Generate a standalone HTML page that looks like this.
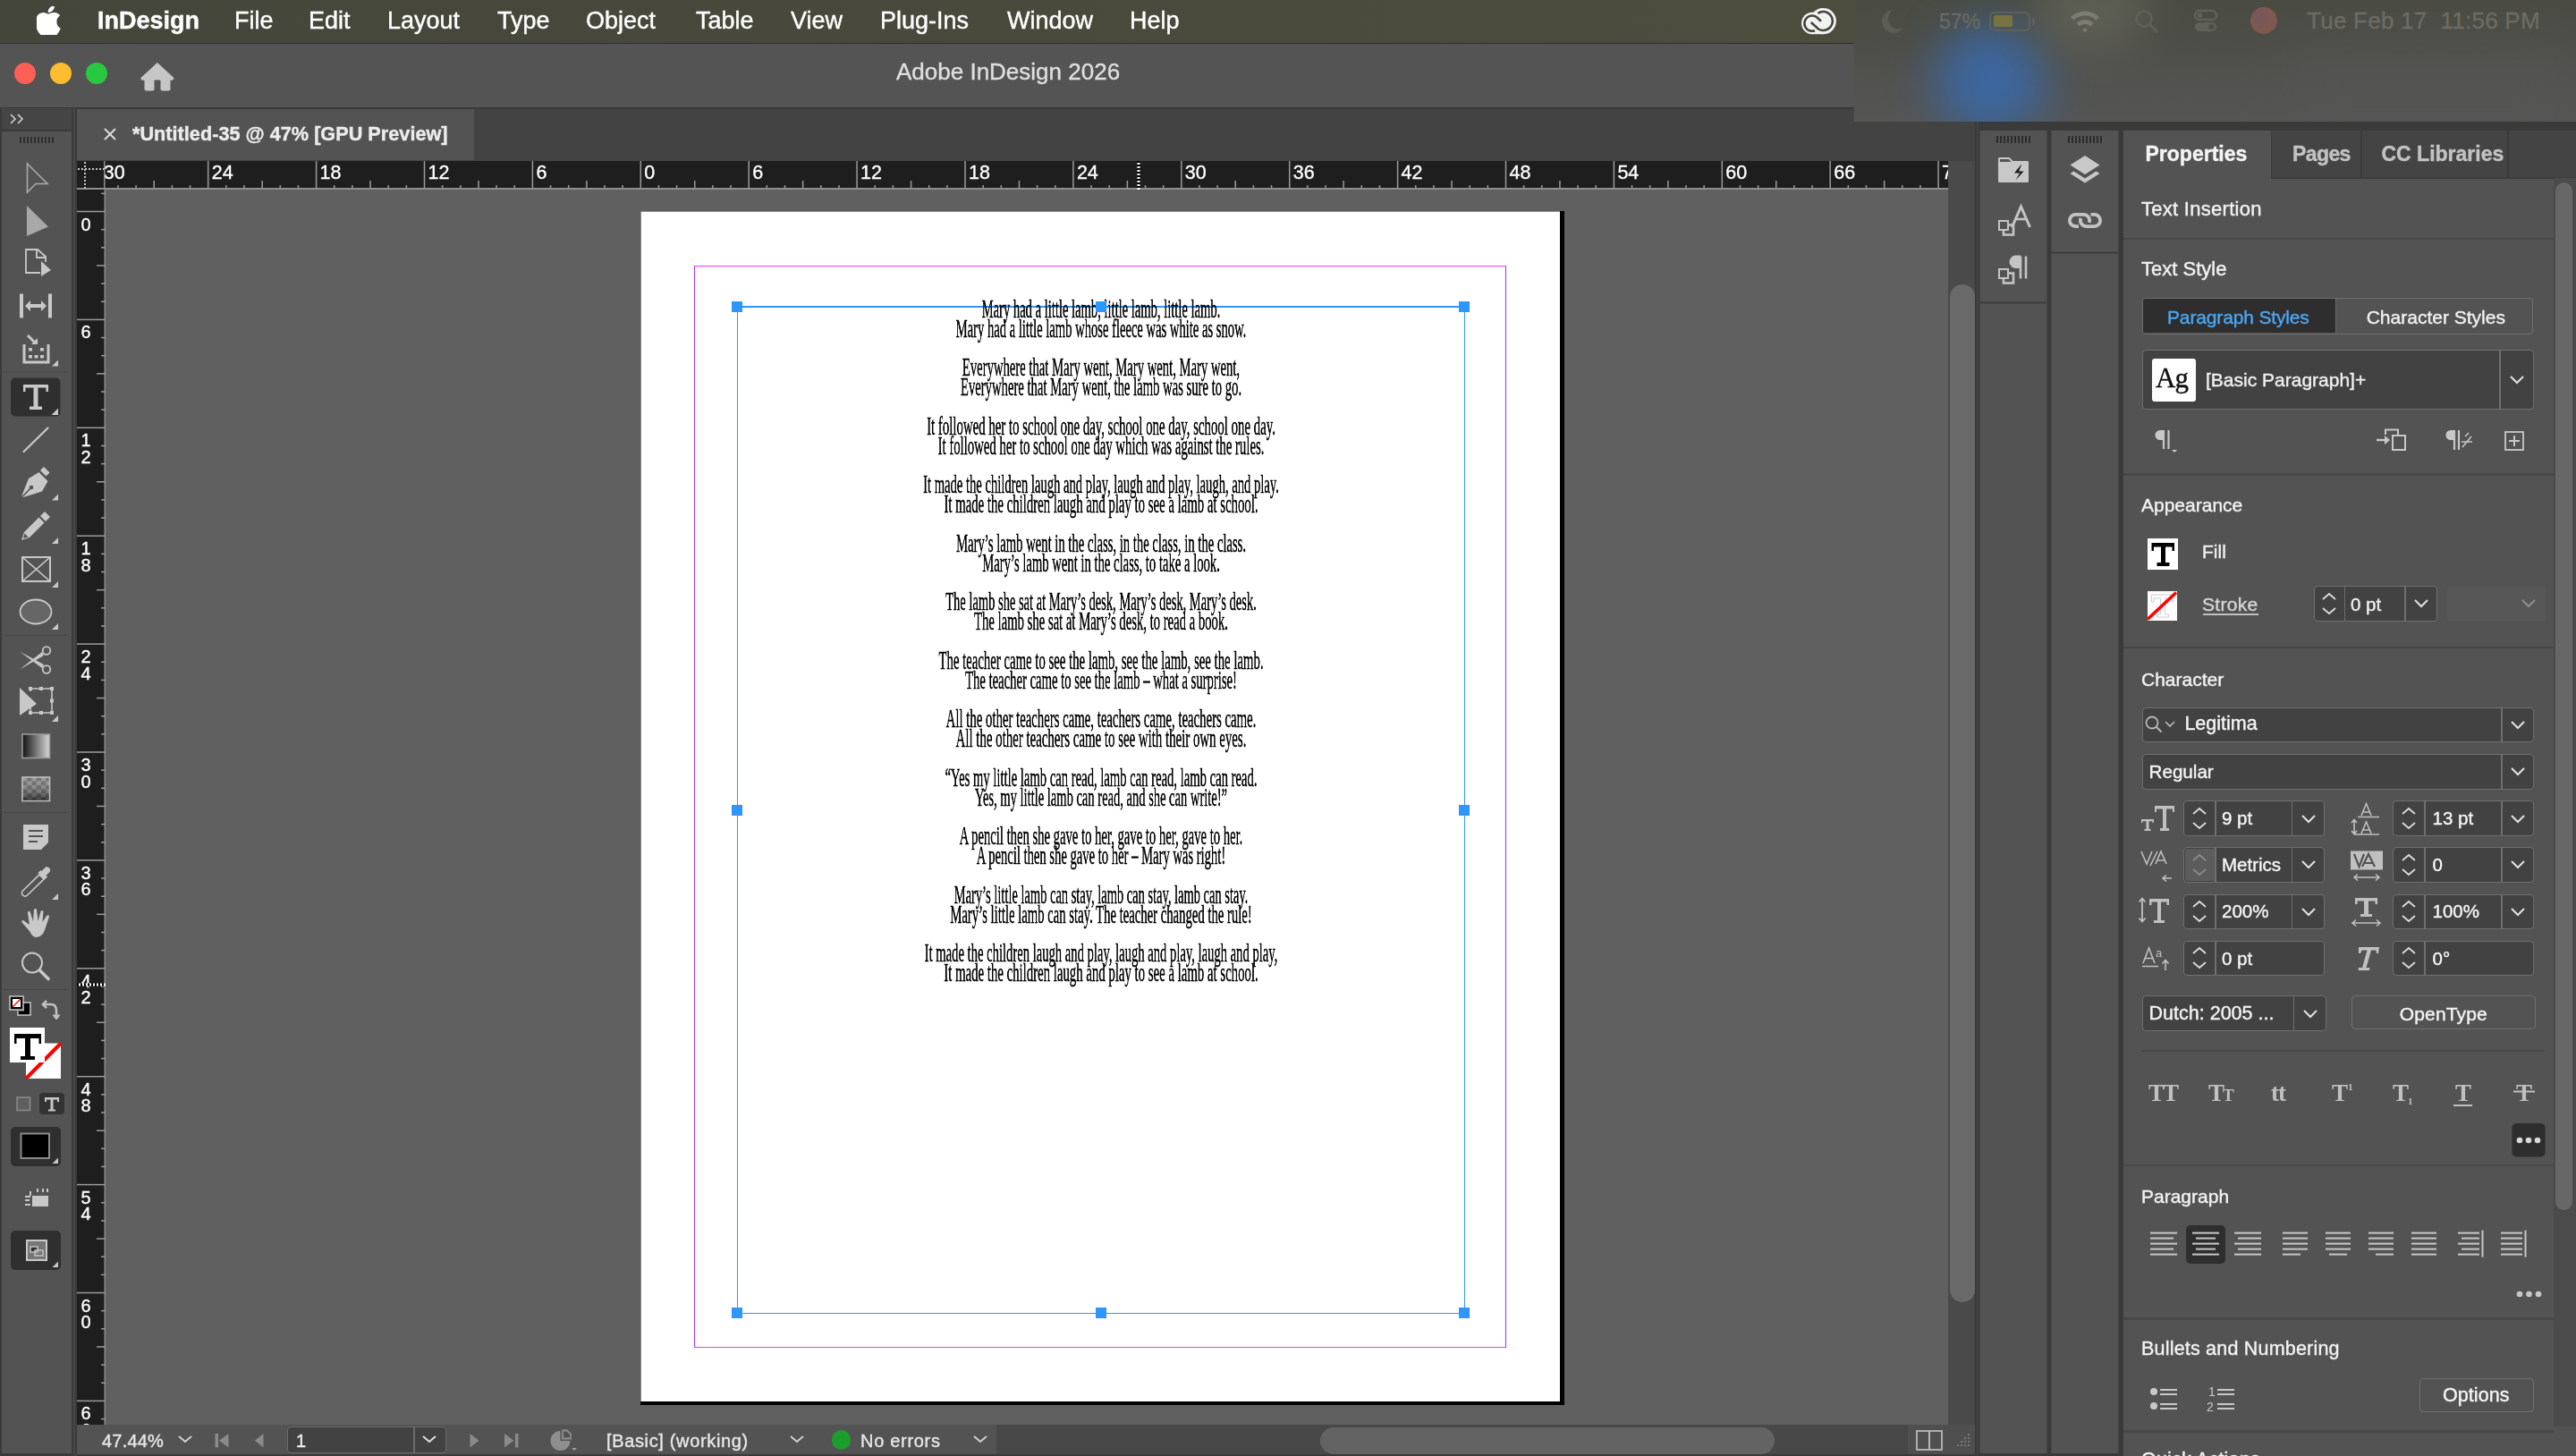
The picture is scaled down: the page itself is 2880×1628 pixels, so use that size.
<!DOCTYPE html>
<html><head><meta charset="utf-8">
<style>
*{margin:0;padding:0;box-sizing:border-box}
html,body{width:2880px;height:1628px;overflow:hidden;background:#535353;font-family:"Liberation Sans",sans-serif;position:relative}
.a{position:absolute}
#menubar,#titlebar,#tabbar,#status,#props,#dock,#toolbar,body>svg{will-change:transform}
.t{position:absolute;white-space:nowrap;line-height:1;-webkit-text-stroke:0.4px currentColor}
.mi{position:absolute;top:10px;font-size:27px;line-height:1;color:#fff;white-space:nowrap;-webkit-text-stroke:0.4px #fff}
#menubar{left:0;top:0;width:2880px;height:48px;background:linear-gradient(90deg,#45463b 0%,#494a3c 40%,#4c4d3d 72%)}
#titlebar{left:0;top:48px;width:2880px;height:73px;background:#545454;border-top:1px solid #2e2e2e;border-bottom:1.5px solid #393939}
#toolbar{left:0;top:121px;width:86px;height:1507px;background:#3e3e3e;z-index:1}
#tabbar{left:86px;top:121px;width:2122px;height:59px;background:#434343;border-top:1.5px solid #393939}
#rulerH{left:86px;top:180px;width:2092px;height:32px;background:#1e1e1e}
#rulerV{left:86px;top:212px;width:32px;height:1381px;background:#1e1e1e}
#canvas{left:118px;top:212px;width:2060px;height:1381px;background:#606060;overflow:hidden}
.pl{position:absolute;left:230.75px;width:2000px;text-align:center;transform-origin:1000px 0;font-family:"Liberation Serif",serif;font-size:28.7px;line-height:1;color:#000;white-space:nowrap;-webkit-text-stroke:0.5px #000;will-change:transform}
.hd{position:absolute;width:12px;height:12px;background:#2e96ff}
#status{left:86px;top:1593px;width:2122px;height:35px;background:#535353}
#vscroll{left:2178px;top:180px;width:30px;height:1413px;background:#4a4a4a}
#dock{left:2208px;top:136px;width:672px;height:1492px;background:#3a3a3a}
#props{left:2374px;top:145px;width:506px;height:1483px;background:#535353}
</style></head><body>
<!-- MENUBAR -->
<div id="menubar" class="a">
 <svg class="a" style="left:41px;top:7px" width="27" height="32" viewBox="0 0 170 200"><path fill="#fff" d="M150 157c-7 16-10 23-19 37-13 19-31 43-53 43-20 0-25-13-52-13s-33 13-53 13C-49 237-67 215-80 196" transform="translate(0,0)" opacity="0"/><path fill="#fff" d="M141 106c0-27 22-40 23-41-13-19-33-21-40-21-17-2-33 10-42 10-9 0-22-10-36-10C27 45 10 56 0 73c-19 34-5 84 14 111 9 13 20 28 34 28 14-1 19-9 36-9 17 0 21 9 36 9 15 0 24-14 33-27 10-15 15-30 15-31-1 0-27-10-27-48zM114 28c8-9 13-22 11-35-11 1-25 8-33 17-7 8-14 21-12 34 12 1 25-6 34-16z" transform="translate(0,0) scale(1)"/></svg>
 <div class="mi" style="left:109px;font-weight:700">InDesign</div>
 <div class="mi" style="left:262px">File</div>
 <div class="mi" style="left:345px">Edit</div>
 <div class="mi" style="left:433px">Layout</div>
 <div class="mi" style="left:556px">Type</div>
 <div class="mi" style="left:655px">Object</div>
 <div class="mi" style="left:778px">Table</div>
 <div class="mi" style="left:884px">View</div>
 <div class="mi" style="left:984px">Plug-Ins</div>
 <div class="mi" style="left:1126px">Window</div>
 <div class="mi" style="left:1263px">Help</div>
 <!-- CC icon -->
 <svg class="a" style="left:2005px;top:0" width="60" height="48" viewBox="2005 0 60 48"><g fill="#f2f2f2"><circle cx="2026.2" cy="26" r="12.2"/><circle cx="2038.3" cy="23.6" r="14.6"/><rect x="2026" y="26" width="12.5" height="12.2"/></g><g fill="none" stroke="#45463b" stroke-width="2.6"><path d="M2036 23.7 L2032 20 A8.6 8.6 0 1 0 2029 34.2"/><path d="M2024.8 25 L2033 32.5 A10.5 10.5 0 1 0 2032.5 14.8"/></g></svg>
</div>
<!-- TITLEBAR -->
<div id="titlebar" class="a">
 <div class="a" style="left:16px;top:21px;width:24px;height:24px;border-radius:50%;background:#fe5f57"></div>
 <div class="a" style="left:56px;top:21px;width:24px;height:24px;border-radius:50%;background:#febc2e"></div>
 <div class="a" style="left:96px;top:21px;width:24px;height:24px;border-radius:50%;background:#28c840"></div>
 <svg class="a" style="left:150px;top:12px" width="60" height="50" viewBox="150 60 60 50"><path d="M175.9 69.5 L193.8 86 Q194.8 87.8 192.5 88.3 L190 88.3 L190 99 Q190 100 189 100 L181 100 Q180 100 180 99 L180 89 Q180 88 179 88 L173 88 Q172 88 172 89 L172 99 Q172 100 171 100 L163 100 Q162 100 162 99 L162 88.3 L159.5 88.3 Q157 87.8 158 86 Z" fill="#c6c6c6" stroke="#c6c6c6" stroke-width="1" stroke-linejoin="round"/></svg>
 <div class="t" style="left:1002px;top:17.5px;font-size:26px;color:#dedede">Adobe InDesign 2026</div>
</div>
<!-- BLUR OVERLAY -->
<div class="a" style="left:2073px;top:0;width:807px;height:136px;z-index:10;background:linear-gradient(180deg,#4a4b42 0%,#4c4d46 30%,#51514e 60%,#555554 100%);overflow:hidden">
 <div class="a" style="left:90px;top:28px;width:125px;height:125px;border-radius:50%;background:#3b68a4;filter:blur(26px);opacity:0.95"></div>
 <div class="a" style="left:200px;top:-40px;width:130px;height:100px;border-radius:50%;background:#66675c;filter:blur(25px);opacity:0.7"></div>
 <div class="a" style="left:480px;top:40px;width:330px;height:110px;background:#575757;filter:blur(30px);opacity:0.4"></div>
 <svg class="a" style="left:24px;top:9px" width="34" height="30"><path d="M20 2 A13 13 0 1 0 31 22 A11 11 0 0 1 20 2 Z" fill="#5c5d54"/></svg>
 <div class="t" style="left:95px;top:12.6px;font-size:23px;color:#696a5f">57%</div>
 <div class="a" style="left:151px;top:12.5px;width:46px;height:22px;border:2px solid #5f6057;border-radius:6px"><div class="a" style="left:2.5px;top:2.5px;width:21px;height:13px;background:#787340;border-radius:2px"></div></div>
 <div class="a" style="left:198.5px;top:19.5px;width:3px;height:8px;background:#5f6057;border-radius:0 2px 2px 0"></div>
 <svg class="a" style="left:240px;top:9px" width="36" height="28" viewBox="0 0 36 28"><path d="M2 10 A23 23 0 0 1 34 10 L30.5 13.5 A18 18 0 0 0 5.5 13.5 Z M8.5 17 A13.5 13.5 0 0 1 27.5 17 L24 20.5 A8.5 8.5 0 0 0 12 20.5 Z M15 24 A4.5 4.5 0 0 1 21 24 L18 27 Z" fill="#7b7b72"/></svg>
 <svg class="a" style="left:313px;top:10px" width="28" height="28"><circle cx="11" cy="11" r="8.5" fill="none" stroke="#5f6057" stroke-width="2.6"/><path d="M17.5 17.5 L25 25" stroke="#5f6057" stroke-width="3" stroke-linecap="round"/></svg>
 <svg class="a" style="left:379px;top:10px" width="30" height="28"><rect x="2" y="2" width="24" height="10" rx="5" fill="none" stroke="#5f6057" stroke-width="2.4"/><circle cx="7.5" cy="7" r="3" fill="#5f6057"/><rect x="2" y="15" width="24" height="10" rx="5" fill="#5f6057"/><circle cx="20.5" cy="20" r="3" fill="#4c4d46"/></svg>
 <div class="a" style="left:443px;top:8px;width:30px;height:30px;border-radius:50%;background:radial-gradient(circle at 40% 40%,#7a5a60,#8a5a50 60%,#6a5a58);opacity:0.85"></div>
 <div class="t" style="left:2579px;top:10px;font-size:26px;color:#6b6c62;letter-spacing:0.25px;margin-left:-2073px">Tue Feb 17&nbsp;&nbsp;11:56 PM</div>
</div>
<!-- TOOLBAR -->
<div id="toolbar" class="a">
<svg class="a" style="left:0;top:0" width="86" height="1507" viewBox="0 121 86 1507">
<rect x="0" y="121" width="86" height="1507" fill="#3b3b3b"/>
<rect x="2" y="121" width="78" height="1504" fill="#535353"/>
<rect x="82" y="121" width="2" height="1507" fill="#474747"/>
<rect x="2" y="121" width="78" height="24" fill="#454545"/>
<rect x="2" y="145" width="78" height="2" fill="#3a3a3a"/>
<path d="M12 128l5 5-5 5M20 128l5 5-5 5" fill="none" stroke="#d0d0d0" stroke-width="1.6"/>
<g fill="#2e2e2e">
<rect x="22" y="153" width="2" height="7"/><rect x="26" y="153" width="2" height="7"/><rect x="30" y="153" width="2" height="7"/><rect x="34" y="153" width="2" height="7"/><rect x="38" y="153" width="2" height="7"/><rect x="42" y="153" width="2" height="7"/><rect x="46" y="153" width="2" height="7"/><rect x="50" y="153" width="2" height="7"/><rect x="54" y="153" width="2" height="7"/><rect x="58" y="153" width="2" height="7"/>
</g>
<!-- selection -->
<path d="M30.5 183 L53 205.5 L40 205.5 L30.5 215 Z" fill="none" stroke="#a9a9a9" stroke-width="1.6" stroke-linejoin="miter"/>
<!-- direct selection -->
<path d="M30 230 L54 253.5 L30 264 Z" fill="#a8a8a8"/>
<!-- page tool -->
<path d="M45 305 L29 305 L29 279 L42 279 L51 287 L51 293" fill="none" stroke="#c8c8c8" stroke-width="1.8"/>
<path d="M41 279 L41 288 L51 288" fill="none" stroke="#c8c8c8" stroke-width="1.8"/>
<path d="M46 292 L57 302 L46 309 Z" fill="#c8c8c8"/>
<!-- gap tool -->
<rect x="22" y="328.5" width="4" height="27" fill="#c8c8c8"/><rect x="54" y="328.5" width="4" height="27" fill="#c8c8c8"/>
<path d="M28 342 L34 336 L34 340 L46 340 L46 336 L52 342 L46 348 L46 344 L34 344 L34 348 Z" fill="#c8c8c8"/>
<!-- content collector -->
<path d="M27 385 L27 405 L54 405 L54 385" fill="none" stroke="#c8c8c8" stroke-width="3"/>
<path d="M31 375 L39 383" stroke="#c8c8c8" stroke-width="3"/><path d="M35 385 L42 385 L42 378 Z" fill="#c8c8c8"/>
<g fill="#c8c8c8"><rect x="32" y="389" width="4" height="3.5"/><rect x="45" y="389" width="4" height="3.5"/><rect x="32" y="397" width="4" height="3.5"/><rect x="38.5" y="397" width="4" height="3.5"/><rect x="45" y="397" width="4" height="3.5"/></g>
<path d="M58 409.5 L65 402.5 L65 409.5 Z" fill="#c8c8c8"/>
<rect x="3" y="415.5" width="73" height="1" fill="#484848"/>
<!-- type tool selected -->
<rect x="12" y="422.5" width="55.5" height="43" rx="5" fill="#2f2f2f"/>
<path d="M26 430 L54 430 L54 438 L51.5 438 L51.5 433.5 L42.5 433.5 L42.5 454.5 L47 454.5 L47 458 L33 458 L33 454.5 L37.5 454.5 L37.5 433.5 L28.5 433.5 L28.5 438 L26 438 Z" fill="#c8c8c8"/>
<path d="M57.5 464 L65 456.5 L65 464 Z" fill="#c8c8c8"/>
<!-- line -->
<path d="M26.5 505 L53.5 478.5" stroke="#c8c8c8" stroke-width="2.2" stroke-linecap="round"/>
<!-- pen -->
<path d="M45 526 L49 522 L55.5 528.5 L51.5 532.5 Z" fill="#c8c8c8"/>
<path d="M43.5 528 L53.5 538 L47 549.5 L26 556 L24.5 554 L32 535 Z" fill="#c8c8c8"/><path d="M25.5 555 L34.5 545.5" stroke="#535353" stroke-width="1.6"/><circle cx="35" cy="545" r="2.3" fill="#535353"/>
<path d="M58 559.5 L65 552.5 L65 559.5 Z" fill="#c8c8c8"/>
<!-- pencil -->
<path d="M45 577 L50 572 L56 578 L51 583 Z" fill="#c8c8c8"/>
<path d="M43.5 578.5 L49.5 584.5 L33 601 L24 604 L27 595 Z" fill="#c8c8c8"/>
<path d="M27.5 596.5 L26 602 L31.5 600.5 Z" fill="#535353"/>
<path d="M58 608 L65 601 L65 608 Z" fill="#c8c8c8"/>
<!-- rect frame -->
<rect x="25" y="623" width="31" height="27" fill="none" stroke="#c8c8c8" stroke-width="2"/>
<path d="M25 623 L56 650 M56 623 L25 650" stroke="#c8c8c8" stroke-width="1.6"/>
<path d="M58 657 L65 650 L65 657 Z" fill="#c8c8c8"/>
<!-- ellipse -->
<ellipse cx="40" cy="684" rx="17.5" ry="13.5" fill="#666" stroke="#c8c8c8" stroke-width="1.8"/>
<path d="M58 704 L65 697 L65 704 Z" fill="#c8c8c8"/>
<rect x="4" y="710" width="72" height="1" fill="#484848"/>
<!-- scissors -->
<circle cx="52" cy="727.5" r="4.3" fill="none" stroke="#c8c8c8" stroke-width="1.8"/>
<circle cx="52" cy="748.5" r="4.3" fill="none" stroke="#c8c8c8" stroke-width="1.8"/>
<path d="M22 728.5 L49 743 L47 747 Z" fill="#c8c8c8"/><path d="M22 748.5 L49 733 L47 729 Z" fill="#c8c8c8"/>
<!-- free transform -->
<path d="M22 769 L41 787 L22 800 Z" fill="#c8c8c8"/>
<path d="M34 773 L34 770 L58 770 L58 797 L34 797 L34 790" fill="none" stroke="#c8c8c8" stroke-width="1.6"/>
<g fill="#c8c8c8"><rect x="32" y="768" width="4" height="4"/><rect x="44" y="768" width="4" height="4"/><rect x="56" y="768" width="4" height="4"/><rect x="56" y="781.5" width="4" height="4"/><rect x="32" y="795" width="4" height="4"/><rect x="44" y="795" width="4" height="4"/><rect x="56" y="795" width="4" height="4"/></g>
<path d="M58 807 L65 800 L65 807 Z" fill="#c8c8c8"/>
<!-- gradient -->
<defs><linearGradient id="gr" x1="0" x2="1"><stop offset="0" stop-color="#111"/><stop offset="1" stop-color="#d8d8d8"/></linearGradient>
<pattern id="chk" width="10.5" height="9" patternUnits="userSpaceOnUse" x="25" y="869"><rect width="10.5" height="9" fill="#5a5a5a"/><rect width="5.25" height="4.5" fill="#888"/><rect x="5.25" y="4.5" width="5.25" height="4.5" fill="#888"/></pattern>
<linearGradient id="fad" x1="0" y1="0" x2="0" y2="1"><stop offset="0" stop-color="#fff" stop-opacity="0.15"/><stop offset="1" stop-color="#000" stop-opacity="0.55"/></linearGradient></defs>
<rect x="25" y="821" width="30.5" height="26.5" fill="url(#gr)" stroke="#9a9a9a" stroke-width="1.6"/>
<!-- gradient feather -->
<rect x="25" y="869" width="30.5" height="26.5" fill="url(#chk)" stroke="#c0c0c0" stroke-width="1.6"/>
<rect x="25.8" y="869.8" width="29" height="25" fill="url(#fad)"/>
<rect x="3" y="908" width="73" height="1" fill="#484848"/>
<!-- note -->
<path d="M26 922 L54 922 L54 942 L46 950 L26 950 Z" fill="#c8c8c8"/>
<path d="M47 950 L54 943 L54 950 Z" fill="#535353"/>
<path d="M32 929 L48 929 M32 935 L48 935 M32 941 L42 941" stroke="#535353" stroke-width="2"/>
<!-- eyedropper -->
<path d="M46.5 974 L50 970.5 A3.5 3.5 0 0 1 55 975.5 L51.5 979 L53 980.5 L50 983.5 L42.5 976 L45.5 973 Z" fill="#c8c8c8"/>
<path d="M44 978 L49 983 L30.5 1001 A3.5 3.5 0 0 1 25.5 996 Z" fill="none" stroke="#c8c8c8" stroke-width="1.7"/>
<path d="M58 1006 L65 999 L65 1006 Z" fill="#c8c8c8"/>
<!-- hand -->
<path d="M33 1041 L25 1032 Q23 1029 26 1029 L33 1034 L31 1021 Q31 1018 33.5 1019 L37 1030 L38 1017 Q39.5 1015 41 1017 L42.5 1030 L45.5 1019 Q47 1017 48.5 1019 L47.5 1031 L52 1024 Q55 1022 55 1025 L50 1040 Q47 1048 40 1048 Q36 1047.5 33 1041 Z" fill="#c8c8c8"/>
<!-- zoom -->
<circle cx="36" cy="1076.5" r="11" fill="none" stroke="#c8c8c8" stroke-width="2"/>
<path d="M44.5 1085 L54 1094.5" stroke="#c8c8c8" stroke-width="3.6" stroke-linecap="round"/>
<rect x="3" y="1106" width="73" height="1" fill="#484848"/>
<!-- small default fill/stroke -->
<rect x="20" y="1121" width="14" height="14" fill="#000" stroke="#c8c8c8" stroke-width="1.5"/>
<rect x="20" y="1124" width="7" height="7" fill="#535353"/>
<rect x="11" y="1114" width="15" height="15" fill="#000" stroke="#c8c8c8" stroke-width="1.5"/>
<rect x="14" y="1117" width="9" height="9" fill="#fff"/><path d="M14 1126 L23 1117" stroke="#f00" stroke-width="1.3"/>
<!-- swap -->
<path d="M52 1127 L48 1123 L52 1119" fill="none" stroke="#c0c0c0" stroke-width="2.6"/>
<path d="M49 1123 L57 1123 Q63 1123 63 1130 L63 1136" fill="none" stroke="#c0c0c0" stroke-width="2.6"/>
<path d="M59 1135 L63 1140 L67 1135 Z" fill="#c0c0c0" stroke="#c0c0c0" stroke-width="1"/>
<!-- stroke swatch -->
<rect x="29" y="1166.5" width="39" height="39.5" fill="#fff"/>
<path d="M29 1206 L68 1166.5" stroke="#f00" stroke-width="4"/>
<!-- fill swatch -->
<rect x="11" y="1149" width="39" height="39" fill="#fff"/>
<path d="M16 1156 L46 1156 L46 1167 L43.5 1167 L43.5 1161 L34 1161 L34 1181 L39 1181 L39 1185 L23 1185 L23 1181 L28 1181 L28 1161 L18.5 1161 L18.5 1167 L16 1167 Z" fill="#000"/>
<!-- formatting container/text -->
<rect x="19" y="1227" width="14.5" height="14.5" fill="#5f5f5f" stroke="#8a8a8a" stroke-width="1.6"/>
<rect x="44" y="1222" width="28" height="24" rx="4" fill="#333"/>
<path d="M50 1227 L66 1227 L66 1232 L64 1232 L64 1229.5 L59.5 1229.5 L59.5 1240.5 L62 1240.5 L62 1242.5 L54 1242.5 L54 1240.5 L56.5 1240.5 L56.5 1229.5 L52 1229.5 L52 1232 L50 1232 Z" fill="#c8c8c8"/>
<!-- normal view -->
<rect x="12" y="1260" width="56" height="44" rx="5" fill="#2f2f2f"/>
<rect x="23.5" y="1267.5" width="31.5" height="27.5" fill="#000" stroke="#8a8a8a" stroke-width="2"/>
<path d="M58.5 1301 L65 1294.5 L65 1301 Z" fill="#c8c8c8"/>
<!-- screen mode -->
<g fill="#c8c8c8"><rect x="36" y="1337" width="18" height="12"/><rect x="28" y="1337" width="6" height="2"/><rect x="33" y="1332" width="2" height="5"/><rect x="28" y="1341" width="5" height="2"/><rect x="28" y="1346" width="6" height="2"/><rect x="41" y="1329" width="2" height="4"/><rect x="47" y="1329" width="2" height="4"/><rect x="52" y="1329" width="2" height="4"/></g>
<!-- last -->
<rect x="12" y="1376" width="56" height="44" rx="5" fill="#2f2f2f"/>
<rect x="30" y="1387" width="22" height="22" fill="#777" stroke="#c8c8c8" stroke-width="2"/>
<rect x="34" y="1394" width="8" height="6" fill="#2f2f2f" stroke="#c8c8c8" stroke-width="1.4"/>
<rect x="39" y="1398" width="9" height="6" fill="none" stroke="#c8c8c8" stroke-width="1.4"/>
<path d="M58.5 1417 L65 1410.5 L65 1417 Z" fill="#c8c8c8"/>
</svg>

</div>
<!-- TAB BAR -->
<div id="tabbar" class="a">
 <div class="a" style="left:0;top:0;width:444px;height:57px;background:#535353"></div>
 <svg class="a" style="left:30px;top:21px" width="14" height="14" viewBox="0 0 14 14"><path d="M1 1L13 13M13 1L1 13" stroke="#e0e0e0" stroke-width="1.8"/></svg>
 <div class="t" style="left:62px;top:16.5px;font-size:21.7px;font-weight:700;color:#ececec">*Untitled-35 @ 47% [GPU Preview]</div>
</div>
<svg class="a" style="left:86px;top:180px" width="2092" height="32"><rect x="0" y="0" width="2092" height="32" fill="#1e1e1e"/><rect x="0" y="30" width="2092" height="2" fill="#8e8e8e"/><svg x="31" y="0" width="2061" height="32" viewBox="31 0 2061 32"><rect x="25.05" y="0" width="1.5" height="30" fill="#9a9a9a"/><text x="29.80" y="19.6" font-size="21.5" fill="#fff" stroke="#fff" stroke-width="0.35" font-family="Liberation Sans">30</text><rect x="45.20" y="27" width="1.5" height="3" fill="#9a9a9a"/><rect x="65.35" y="27" width="1.5" height="3" fill="#9a9a9a"/><rect x="85.50" y="22" width="1.5" height="8" fill="#9a9a9a"/><rect x="105.65" y="27" width="1.5" height="3" fill="#9a9a9a"/><rect x="125.80" y="27" width="1.5" height="3" fill="#9a9a9a"/><rect x="145.95" y="0" width="1.5" height="30" fill="#9a9a9a"/><text x="150.70" y="19.6" font-size="21.5" fill="#fff" stroke="#fff" stroke-width="0.35" font-family="Liberation Sans">24</text><rect x="166.10" y="27" width="1.5" height="3" fill="#9a9a9a"/><rect x="186.25" y="27" width="1.5" height="3" fill="#9a9a9a"/><rect x="206.40" y="22" width="1.5" height="8" fill="#9a9a9a"/><rect x="226.55" y="27" width="1.5" height="3" fill="#9a9a9a"/><rect x="246.70" y="27" width="1.5" height="3" fill="#9a9a9a"/><rect x="266.85" y="0" width="1.5" height="30" fill="#9a9a9a"/><text x="271.60" y="19.6" font-size="21.5" fill="#fff" stroke="#fff" stroke-width="0.35" font-family="Liberation Sans">18</text><rect x="287.00" y="27" width="1.5" height="3" fill="#9a9a9a"/><rect x="307.15" y="27" width="1.5" height="3" fill="#9a9a9a"/><rect x="327.30" y="22" width="1.5" height="8" fill="#9a9a9a"/><rect x="347.45" y="27" width="1.5" height="3" fill="#9a9a9a"/><rect x="367.60" y="27" width="1.5" height="3" fill="#9a9a9a"/><rect x="387.75" y="0" width="1.5" height="30" fill="#9a9a9a"/><text x="392.50" y="19.6" font-size="21.5" fill="#fff" stroke="#fff" stroke-width="0.35" font-family="Liberation Sans">12</text><rect x="407.90" y="27" width="1.5" height="3" fill="#9a9a9a"/><rect x="428.05" y="27" width="1.5" height="3" fill="#9a9a9a"/><rect x="448.20" y="22" width="1.5" height="8" fill="#9a9a9a"/><rect x="468.35" y="27" width="1.5" height="3" fill="#9a9a9a"/><rect x="488.50" y="27" width="1.5" height="3" fill="#9a9a9a"/><rect x="508.65" y="0" width="1.5" height="30" fill="#9a9a9a"/><text x="513.40" y="19.6" font-size="21.5" fill="#fff" stroke="#fff" stroke-width="0.35" font-family="Liberation Sans">6</text><rect x="528.80" y="27" width="1.5" height="3" fill="#9a9a9a"/><rect x="548.95" y="27" width="1.5" height="3" fill="#9a9a9a"/><rect x="569.10" y="22" width="1.5" height="8" fill="#9a9a9a"/><rect x="589.25" y="27" width="1.5" height="3" fill="#9a9a9a"/><rect x="609.40" y="27" width="1.5" height="3" fill="#9a9a9a"/><rect x="629.55" y="0" width="1.5" height="30" fill="#9a9a9a"/><text x="634.30" y="19.6" font-size="21.5" fill="#fff" stroke="#fff" stroke-width="0.35" font-family="Liberation Sans">0</text><rect x="649.70" y="27" width="1.5" height="3" fill="#9a9a9a"/><rect x="669.85" y="27" width="1.5" height="3" fill="#9a9a9a"/><rect x="690.00" y="22" width="1.5" height="8" fill="#9a9a9a"/><rect x="710.15" y="27" width="1.5" height="3" fill="#9a9a9a"/><rect x="730.30" y="27" width="1.5" height="3" fill="#9a9a9a"/><rect x="750.45" y="0" width="1.5" height="30" fill="#9a9a9a"/><text x="755.20" y="19.6" font-size="21.5" fill="#fff" stroke="#fff" stroke-width="0.35" font-family="Liberation Sans">6</text><rect x="770.60" y="27" width="1.5" height="3" fill="#9a9a9a"/><rect x="790.75" y="27" width="1.5" height="3" fill="#9a9a9a"/><rect x="810.90" y="22" width="1.5" height="8" fill="#9a9a9a"/><rect x="831.05" y="27" width="1.5" height="3" fill="#9a9a9a"/><rect x="851.20" y="27" width="1.5" height="3" fill="#9a9a9a"/><rect x="871.35" y="0" width="1.5" height="30" fill="#9a9a9a"/><text x="876.10" y="19.6" font-size="21.5" fill="#fff" stroke="#fff" stroke-width="0.35" font-family="Liberation Sans">12</text><rect x="891.50" y="27" width="1.5" height="3" fill="#9a9a9a"/><rect x="911.65" y="27" width="1.5" height="3" fill="#9a9a9a"/><rect x="931.80" y="22" width="1.5" height="8" fill="#9a9a9a"/><rect x="951.95" y="27" width="1.5" height="3" fill="#9a9a9a"/><rect x="972.10" y="27" width="1.5" height="3" fill="#9a9a9a"/><rect x="992.25" y="0" width="1.5" height="30" fill="#9a9a9a"/><text x="997.00" y="19.6" font-size="21.5" fill="#fff" stroke="#fff" stroke-width="0.35" font-family="Liberation Sans">18</text><rect x="1012.40" y="27" width="1.5" height="3" fill="#9a9a9a"/><rect x="1032.55" y="27" width="1.5" height="3" fill="#9a9a9a"/><rect x="1052.70" y="22" width="1.5" height="8" fill="#9a9a9a"/><rect x="1072.85" y="27" width="1.5" height="3" fill="#9a9a9a"/><rect x="1093.00" y="27" width="1.5" height="3" fill="#9a9a9a"/><rect x="1113.15" y="0" width="1.5" height="30" fill="#9a9a9a"/><text x="1117.90" y="19.6" font-size="21.5" fill="#fff" stroke="#fff" stroke-width="0.35" font-family="Liberation Sans">24</text><rect x="1133.30" y="27" width="1.5" height="3" fill="#9a9a9a"/><rect x="1153.45" y="27" width="1.5" height="3" fill="#9a9a9a"/><rect x="1173.60" y="22" width="1.5" height="8" fill="#9a9a9a"/><rect x="1193.75" y="27" width="1.5" height="3" fill="#9a9a9a"/><rect x="1213.90" y="27" width="1.5" height="3" fill="#9a9a9a"/><rect x="1234.05" y="0" width="1.5" height="30" fill="#9a9a9a"/><text x="1238.80" y="19.6" font-size="21.5" fill="#fff" stroke="#fff" stroke-width="0.35" font-family="Liberation Sans">30</text><rect x="1254.20" y="27" width="1.5" height="3" fill="#9a9a9a"/><rect x="1274.35" y="27" width="1.5" height="3" fill="#9a9a9a"/><rect x="1294.50" y="22" width="1.5" height="8" fill="#9a9a9a"/><rect x="1314.65" y="27" width="1.5" height="3" fill="#9a9a9a"/><rect x="1334.80" y="27" width="1.5" height="3" fill="#9a9a9a"/><rect x="1354.95" y="0" width="1.5" height="30" fill="#9a9a9a"/><text x="1359.70" y="19.6" font-size="21.5" fill="#fff" stroke="#fff" stroke-width="0.35" font-family="Liberation Sans">36</text><rect x="1375.10" y="27" width="1.5" height="3" fill="#9a9a9a"/><rect x="1395.25" y="27" width="1.5" height="3" fill="#9a9a9a"/><rect x="1415.40" y="22" width="1.5" height="8" fill="#9a9a9a"/><rect x="1435.55" y="27" width="1.5" height="3" fill="#9a9a9a"/><rect x="1455.70" y="27" width="1.5" height="3" fill="#9a9a9a"/><rect x="1475.85" y="0" width="1.5" height="30" fill="#9a9a9a"/><text x="1480.60" y="19.6" font-size="21.5" fill="#fff" stroke="#fff" stroke-width="0.35" font-family="Liberation Sans">42</text><rect x="1496.00" y="27" width="1.5" height="3" fill="#9a9a9a"/><rect x="1516.15" y="27" width="1.5" height="3" fill="#9a9a9a"/><rect x="1536.30" y="22" width="1.5" height="8" fill="#9a9a9a"/><rect x="1556.45" y="27" width="1.5" height="3" fill="#9a9a9a"/><rect x="1576.60" y="27" width="1.5" height="3" fill="#9a9a9a"/><rect x="1596.75" y="0" width="1.5" height="30" fill="#9a9a9a"/><text x="1601.50" y="19.6" font-size="21.5" fill="#fff" stroke="#fff" stroke-width="0.35" font-family="Liberation Sans">48</text><rect x="1616.90" y="27" width="1.5" height="3" fill="#9a9a9a"/><rect x="1637.05" y="27" width="1.5" height="3" fill="#9a9a9a"/><rect x="1657.20" y="22" width="1.5" height="8" fill="#9a9a9a"/><rect x="1677.35" y="27" width="1.5" height="3" fill="#9a9a9a"/><rect x="1697.50" y="27" width="1.5" height="3" fill="#9a9a9a"/><rect x="1717.65" y="0" width="1.5" height="30" fill="#9a9a9a"/><text x="1722.40" y="19.6" font-size="21.5" fill="#fff" stroke="#fff" stroke-width="0.35" font-family="Liberation Sans">54</text><rect x="1737.80" y="27" width="1.5" height="3" fill="#9a9a9a"/><rect x="1757.95" y="27" width="1.5" height="3" fill="#9a9a9a"/><rect x="1778.10" y="22" width="1.5" height="8" fill="#9a9a9a"/><rect x="1798.25" y="27" width="1.5" height="3" fill="#9a9a9a"/><rect x="1818.40" y="27" width="1.5" height="3" fill="#9a9a9a"/><rect x="1838.55" y="0" width="1.5" height="30" fill="#9a9a9a"/><text x="1843.30" y="19.6" font-size="21.5" fill="#fff" stroke="#fff" stroke-width="0.35" font-family="Liberation Sans">60</text><rect x="1858.70" y="27" width="1.5" height="3" fill="#9a9a9a"/><rect x="1878.85" y="27" width="1.5" height="3" fill="#9a9a9a"/><rect x="1899.00" y="22" width="1.5" height="8" fill="#9a9a9a"/><rect x="1919.15" y="27" width="1.5" height="3" fill="#9a9a9a"/><rect x="1939.30" y="27" width="1.5" height="3" fill="#9a9a9a"/><rect x="1959.45" y="0" width="1.5" height="30" fill="#9a9a9a"/><text x="1964.20" y="19.6" font-size="21.5" fill="#fff" stroke="#fff" stroke-width="0.35" font-family="Liberation Sans">66</text><rect x="1979.60" y="27" width="1.5" height="3" fill="#9a9a9a"/><rect x="1999.75" y="27" width="1.5" height="3" fill="#9a9a9a"/><rect x="2019.90" y="22" width="1.5" height="8" fill="#9a9a9a"/><rect x="2040.05" y="27" width="1.5" height="3" fill="#9a9a9a"/><rect x="2060.20" y="27" width="1.5" height="3" fill="#9a9a9a"/><rect x="2080.35" y="0" width="1.5" height="30" fill="#9a9a9a"/><text x="2085.10" y="19.6" font-size="21.5" fill="#fff" stroke="#fff" stroke-width="0.35" font-family="Liberation Sans">72</text></svg><rect x="1185.5" y="0" width="3" height="2" fill="#000"/><rect x="1185.5" y="2" width="3" height="2" fill="#fff"/><rect x="1185.5" y="4" width="3" height="2" fill="#000"/><rect x="1185.5" y="6" width="3" height="2" fill="#fff"/><rect x="1185.5" y="8" width="3" height="2" fill="#000"/><rect x="1185.5" y="10" width="3" height="2" fill="#fff"/><rect x="1185.5" y="12" width="3" height="2" fill="#000"/><rect x="1185.5" y="14" width="3" height="2" fill="#fff"/><rect x="1185.5" y="16" width="3" height="2" fill="#000"/><rect x="1185.5" y="18" width="3" height="2" fill="#fff"/><rect x="1185.5" y="20" width="3" height="2" fill="#000"/><rect x="1185.5" y="22" width="3" height="2" fill="#fff"/><rect x="1185.5" y="24" width="3" height="2" fill="#000"/><rect x="1185.5" y="26" width="3" height="2" fill="#fff"/><rect x="1185.5" y="28" width="3" height="2" fill="#000"/><rect x="1185.5" y="30" width="3" height="2" fill="#fff"/><rect x="30" y="0" width="1.5" height="32" fill="#8e8e8e"/><g fill="#c8c8c8"><rect x="1" y="8" width="2" height="2"/><rect x="5" y="8" width="2" height="2"/><rect x="9" y="8" width="2" height="2"/><rect x="13" y="8" width="2" height="2"/><rect x="17" y="8" width="2" height="2"/><rect x="21" y="8" width="2" height="2"/><rect x="25" y="8" width="2" height="2"/><rect x="29" y="8" width="2" height="2"/><rect x="8" y="1" width="2" height="2"/><rect x="8" y="5" width="2" height="2"/><rect x="8" y="9" width="2" height="2"/><rect x="8" y="13" width="2" height="2"/><rect x="8" y="17" width="2" height="2"/><rect x="8" y="21" width="2" height="2"/><rect x="8" y="25" width="2" height="2"/><rect x="8" y="29" width="2" height="2"/></g></svg>
<svg class="a" style="left:86px;top:212px" width="33" height="1381"><rect x="0" y="0" width="31" height="1381" fill="#1e1e1e"/><rect x="30.5" y="0" width="1.5" height="1381" fill="#8e8e8e"/><rect x="27" y="-16.55" width="4" height="1.5" fill="#9a9a9a"/><rect x="27" y="3.60" width="4" height="1.5" fill="#9a9a9a"/><rect x="0" y="23.75" width="31" height="1.5" fill="#9a9a9a"/><text x="4.5" y="45.50" font-size="20" fill="#fff" stroke="#fff" stroke-width="0.35" font-family="Liberation Sans">0</text><rect x="27" y="43.90" width="4" height="1.5" fill="#9a9a9a"/><rect x="27" y="64.05" width="4" height="1.5" fill="#9a9a9a"/><rect x="22" y="84.20" width="9" height="1.5" fill="#9a9a9a"/><rect x="27" y="104.35" width="4" height="1.5" fill="#9a9a9a"/><rect x="27" y="124.50" width="4" height="1.5" fill="#9a9a9a"/><rect x="0" y="144.65" width="31" height="1.5" fill="#9a9a9a"/><text x="4.5" y="166.40" font-size="20" fill="#fff" stroke="#fff" stroke-width="0.35" font-family="Liberation Sans">6</text><rect x="27" y="164.80" width="4" height="1.5" fill="#9a9a9a"/><rect x="27" y="184.95" width="4" height="1.5" fill="#9a9a9a"/><rect x="22" y="205.10" width="9" height="1.5" fill="#9a9a9a"/><rect x="27" y="225.25" width="4" height="1.5" fill="#9a9a9a"/><rect x="27" y="245.40" width="4" height="1.5" fill="#9a9a9a"/><rect x="0" y="265.55" width="31" height="1.5" fill="#9a9a9a"/><text x="4.5" y="287.30" font-size="20" fill="#fff" stroke="#fff" stroke-width="0.35" font-family="Liberation Sans">1</text><text x="4.5" y="305.80" font-size="20" fill="#fff" stroke="#fff" stroke-width="0.35" font-family="Liberation Sans">2</text><rect x="27" y="285.70" width="4" height="1.5" fill="#9a9a9a"/><rect x="27" y="305.85" width="4" height="1.5" fill="#9a9a9a"/><rect x="22" y="326.00" width="9" height="1.5" fill="#9a9a9a"/><rect x="27" y="346.15" width="4" height="1.5" fill="#9a9a9a"/><rect x="27" y="366.30" width="4" height="1.5" fill="#9a9a9a"/><rect x="0" y="386.45" width="31" height="1.5" fill="#9a9a9a"/><text x="4.5" y="408.20" font-size="20" fill="#fff" stroke="#fff" stroke-width="0.35" font-family="Liberation Sans">1</text><text x="4.5" y="426.70" font-size="20" fill="#fff" stroke="#fff" stroke-width="0.35" font-family="Liberation Sans">8</text><rect x="27" y="406.60" width="4" height="1.5" fill="#9a9a9a"/><rect x="27" y="426.75" width="4" height="1.5" fill="#9a9a9a"/><rect x="22" y="446.90" width="9" height="1.5" fill="#9a9a9a"/><rect x="27" y="467.05" width="4" height="1.5" fill="#9a9a9a"/><rect x="27" y="487.20" width="4" height="1.5" fill="#9a9a9a"/><rect x="0" y="507.35" width="31" height="1.5" fill="#9a9a9a"/><text x="4.5" y="529.10" font-size="20" fill="#fff" stroke="#fff" stroke-width="0.35" font-family="Liberation Sans">2</text><text x="4.5" y="547.60" font-size="20" fill="#fff" stroke="#fff" stroke-width="0.35" font-family="Liberation Sans">4</text><rect x="27" y="527.50" width="4" height="1.5" fill="#9a9a9a"/><rect x="27" y="547.65" width="4" height="1.5" fill="#9a9a9a"/><rect x="22" y="567.80" width="9" height="1.5" fill="#9a9a9a"/><rect x="27" y="587.95" width="4" height="1.5" fill="#9a9a9a"/><rect x="27" y="608.10" width="4" height="1.5" fill="#9a9a9a"/><rect x="0" y="628.25" width="31" height="1.5" fill="#9a9a9a"/><text x="4.5" y="650.00" font-size="20" fill="#fff" stroke="#fff" stroke-width="0.35" font-family="Liberation Sans">3</text><text x="4.5" y="668.50" font-size="20" fill="#fff" stroke="#fff" stroke-width="0.35" font-family="Liberation Sans">0</text><rect x="27" y="648.40" width="4" height="1.5" fill="#9a9a9a"/><rect x="27" y="668.55" width="4" height="1.5" fill="#9a9a9a"/><rect x="22" y="688.70" width="9" height="1.5" fill="#9a9a9a"/><rect x="27" y="708.85" width="4" height="1.5" fill="#9a9a9a"/><rect x="27" y="729.00" width="4" height="1.5" fill="#9a9a9a"/><rect x="0" y="749.15" width="31" height="1.5" fill="#9a9a9a"/><text x="4.5" y="770.90" font-size="20" fill="#fff" stroke="#fff" stroke-width="0.35" font-family="Liberation Sans">3</text><text x="4.5" y="789.40" font-size="20" fill="#fff" stroke="#fff" stroke-width="0.35" font-family="Liberation Sans">6</text><rect x="27" y="769.30" width="4" height="1.5" fill="#9a9a9a"/><rect x="27" y="789.45" width="4" height="1.5" fill="#9a9a9a"/><rect x="22" y="809.60" width="9" height="1.5" fill="#9a9a9a"/><rect x="27" y="829.75" width="4" height="1.5" fill="#9a9a9a"/><rect x="27" y="849.90" width="4" height="1.5" fill="#9a9a9a"/><rect x="0" y="870.05" width="31" height="1.5" fill="#9a9a9a"/><text x="4.5" y="891.80" font-size="20" fill="#fff" stroke="#fff" stroke-width="0.35" font-family="Liberation Sans">4</text><text x="4.5" y="910.30" font-size="20" fill="#fff" stroke="#fff" stroke-width="0.35" font-family="Liberation Sans">2</text><rect x="27" y="890.20" width="4" height="1.5" fill="#9a9a9a"/><rect x="27" y="910.35" width="4" height="1.5" fill="#9a9a9a"/><rect x="22" y="930.50" width="9" height="1.5" fill="#9a9a9a"/><rect x="27" y="950.65" width="4" height="1.5" fill="#9a9a9a"/><rect x="27" y="970.80" width="4" height="1.5" fill="#9a9a9a"/><rect x="0" y="990.95" width="31" height="1.5" fill="#9a9a9a"/><text x="4.5" y="1012.70" font-size="20" fill="#fff" stroke="#fff" stroke-width="0.35" font-family="Liberation Sans">4</text><text x="4.5" y="1031.20" font-size="20" fill="#fff" stroke="#fff" stroke-width="0.35" font-family="Liberation Sans">8</text><rect x="27" y="1011.10" width="4" height="1.5" fill="#9a9a9a"/><rect x="27" y="1031.25" width="4" height="1.5" fill="#9a9a9a"/><rect x="22" y="1051.40" width="9" height="1.5" fill="#9a9a9a"/><rect x="27" y="1071.55" width="4" height="1.5" fill="#9a9a9a"/><rect x="27" y="1091.70" width="4" height="1.5" fill="#9a9a9a"/><rect x="0" y="1111.85" width="31" height="1.5" fill="#9a9a9a"/><text x="4.5" y="1133.60" font-size="20" fill="#fff" stroke="#fff" stroke-width="0.35" font-family="Liberation Sans">5</text><text x="4.5" y="1152.10" font-size="20" fill="#fff" stroke="#fff" stroke-width="0.35" font-family="Liberation Sans">4</text><rect x="27" y="1132.00" width="4" height="1.5" fill="#9a9a9a"/><rect x="27" y="1152.15" width="4" height="1.5" fill="#9a9a9a"/><rect x="22" y="1172.30" width="9" height="1.5" fill="#9a9a9a"/><rect x="27" y="1192.45" width="4" height="1.5" fill="#9a9a9a"/><rect x="27" y="1212.60" width="4" height="1.5" fill="#9a9a9a"/><rect x="0" y="1232.75" width="31" height="1.5" fill="#9a9a9a"/><text x="4.5" y="1254.50" font-size="20" fill="#fff" stroke="#fff" stroke-width="0.35" font-family="Liberation Sans">6</text><text x="4.5" y="1273.00" font-size="20" fill="#fff" stroke="#fff" stroke-width="0.35" font-family="Liberation Sans">0</text><rect x="27" y="1252.90" width="4" height="1.5" fill="#9a9a9a"/><rect x="27" y="1273.05" width="4" height="1.5" fill="#9a9a9a"/><rect x="22" y="1293.20" width="9" height="1.5" fill="#9a9a9a"/><rect x="27" y="1313.35" width="4" height="1.5" fill="#9a9a9a"/><rect x="27" y="1333.50" width="4" height="1.5" fill="#9a9a9a"/><rect x="0" y="1353.65" width="31" height="1.5" fill="#9a9a9a"/><text x="4.5" y="1375.40" font-size="20" fill="#fff" stroke="#fff" stroke-width="0.35" font-family="Liberation Sans">6</text><text x="4.5" y="1393.90" font-size="20" fill="#fff" stroke="#fff" stroke-width="0.35" font-family="Liberation Sans">6</text><rect x="27" y="1373.80" width="4" height="1.5" fill="#9a9a9a"/><rect x="0" y="887.5" width="2" height="3" fill="#000"/><rect x="2" y="887.5" width="2" height="3" fill="#fff"/><rect x="4" y="887.5" width="2" height="3" fill="#000"/><rect x="6" y="887.5" width="2" height="3" fill="#fff"/><rect x="8" y="887.5" width="2" height="3" fill="#000"/><rect x="10" y="887.5" width="2" height="3" fill="#fff"/><rect x="12" y="887.5" width="2" height="3" fill="#000"/><rect x="14" y="887.5" width="2" height="3" fill="#fff"/><rect x="16" y="887.5" width="2" height="3" fill="#000"/><rect x="18" y="887.5" width="2" height="3" fill="#fff"/><rect x="20" y="887.5" width="2" height="3" fill="#000"/><rect x="22" y="887.5" width="2" height="3" fill="#fff"/><rect x="24" y="887.5" width="2" height="3" fill="#000"/><rect x="26" y="887.5" width="2" height="3" fill="#fff"/><rect x="28" y="887.5" width="2" height="3" fill="#000"/><rect x="30" y="887.5" width="2" height="3" fill="#fff"/></svg>
<!-- CANVAS -->
<div id="canvas" class="a"></div>
<div class="a" style="left:715.5px;top:236px;width:1033px;height:1335px;background:#000"></div>
<div class="a" style="left:715.5px;top:236px;width:1028.5px;height:1331px;background:#fff;border-left:1.5px solid #8a8a8a;border-top:1px solid #8a8a8a"></div>
<div class="a" style="left:775.5px;top:296.5px;width:908.5px;height:1210.5px;border-left:1.5px solid #a030ff;border-right:1.5px solid #a030ff;border-top:1.5px solid #ff33ff;border-bottom:1.5px solid #ff33ff"></div>
<div class="a" style="left:823.5px;top:341.5px;width:1815px;height:0"></div>
<div id="frame" class="a" style="left:823.8px;top:342px;width:814px;height:1127px;border:1.5px solid #2e96ff;border-top-width:2px;border-bottom-width:1.8px"></div>
<div class="pl" style="top:330.8px;transform:scaleX(0.5078)">Mary had a little lamb, little lamb, little lamb.</div>
<div class="pl" style="top:352.6px;transform:scaleX(0.5089)">Mary had a little lamb whose fleece was white as snow.</div>
<div class="pl" style="top:396.2px;transform:scaleX(0.511)">Everywhere that Mary went, Mary went, Mary went,</div>
<div class="pl" style="top:418.1px;transform:scaleX(0.5115)">Everywhere that Mary went, the lamb was sure to go.</div>
<div class="pl" style="top:461.7px;transform:scaleX(0.5172)">It followed her to school one day, school one day, school one day.</div>
<div class="pl" style="top:483.6px;transform:scaleX(0.5145)">It followed her to school one day which was against the rules.</div>
<div class="pl" style="top:527.2px;transform:scaleX(0.5089)">It made the children laugh and play, laugh and play, laugh, and play.</div>
<div class="pl" style="top:549.1px;transform:scaleX(0.5156)">It made the children laugh and play to see a lamb at school.</div>
<div class="pl" style="top:592.7px;transform:scaleX(0.5109)">Mary’s lamb went in the class, in the class, in the class.</div>
<div class="pl" style="top:614.5px;transform:scaleX(0.5107)">Mary’s lamb went in the class, to take a look.</div>
<div class="pl" style="top:658.2px;transform:scaleX(0.5055)">The lamb she sat at Mary’s desk, Mary’s desk, Mary’s desk.</div>
<div class="pl" style="top:680.0px;transform:scaleX(0.5118)">The lamb she sat at Mary’s desk, to read a book.</div>
<div class="pl" style="top:723.7px;transform:scaleX(0.5151)">The teacher came to see the lamb, see the lamb, see the lamb.</div>
<div class="pl" style="top:745.5px;transform:scaleX(0.5114)">The teacher came to see the lamb – what a surprise!</div>
<div class="pl" style="top:789.2px;transform:scaleX(0.5152)">All the other teachers came, teachers came, teachers came.</div>
<div class="pl" style="top:811.0px;transform:scaleX(0.5181)">All the other teachers came to see with their own eyes.</div>
<div class="pl" style="top:854.7px;transform:scaleX(0.5104)">“Yes my little lamb can read, lamb can read, lamb can read.</div>
<div class="pl" style="top:876.5px;transform:scaleX(0.5064)">Yes, my little lamb can read, and she can write!”</div>
<div class="pl" style="top:920.2px;transform:scaleX(0.5108)">A pencil then she gave to her, gave to her, gave to her.</div>
<div class="pl" style="top:942.0px;transform:scaleX(0.5094)">A pencil then she gave to her – Mary was right!</div>
<div class="pl" style="top:985.7px;transform:scaleX(0.5041)">Mary’s little lamb can stay, lamb can stay, lamb can stay.</div>
<div class="pl" style="top:1007.5px;transform:scaleX(0.5123)">Mary’s little lamb can stay. The teacher changed the rule!</div>
<div class="pl" style="top:1051.2px;transform:scaleX(0.5096)">It made the children laugh and play, laugh and play, laugh and play,</div>
<div class="pl" style="top:1073.0px;transform:scaleX(0.5159)">It made the children laugh and play to see a lamb at school.</div>
<div class="hd" style="left:818px;top:337px"></div>
<div class="hd" style="left:1225px;top:337px"></div>
<div class="hd" style="left:1631px;top:337px"></div>
<div class="hd" style="left:818px;top:900px"></div>
<div class="hd" style="left:1631px;top:900px"></div>
<div class="hd" style="left:818px;top:1462px"></div>
<div class="hd" style="left:1225px;top:1462px"></div>
<div class="hd" style="left:1631px;top:1462px"></div>
<!-- STATUS -->
<div id="status" class="a">
<div class="a" style="left:0;top:0;width:2122px;height:35px;background:#535353"></div>
<div class="a" style="left:1028px;top:0;width:1019px;height:35px;background:#484848"></div>
<div class="a" style="left:2047px;top:0;width:75px;height:35px;background:#4f4f4f"></div>
<div class="a" style="left:0;top:33px;width:2122px;height:2px;background:#3a3a3a"></div>
<div class="t" style="left:28px;top:7.5px;font-size:20px;color:#e6e6e6;letter-spacing:0.2px">47.44%</div>
<svg class="a" style="left:112px;top:10px" width="18" height="12"><path d="M2 3l7 6 7-6" fill="none" stroke="#d0d0d0" stroke-width="2"/></svg>
<svg class="a" style="left:150px;top:9px" width="450" height="18">
 <rect x="4.5" y="1" width="3.5" height="15.5" fill="#8a8a8a"/><path d="M9 8.7 L19.5 1 L19.5 16.5 Z" fill="#8a8a8a"/>
 <path d="M49 8.7 L58.5 1 L58.5 16.5 Z" fill="#8a8a8a"/>
 <path d="M289.5 1 L299.5 8.7 L289.5 16.5 Z" fill="#8a8a8a"/>
 <path d="M328 1 L338.5 8.7 L328 16.5 Z" fill="#8a8a8a"/><rect x="340" y="1" width="3.5" height="15.5" fill="#8a8a8a"/>
</svg>
<div class="a" style="left:235px;top:1.5px;width:178px;height:30.5px;background:#424242;border:1.5px solid #6a6a6a;border-radius:4px"></div>
<div class="a" style="left:376px;top:2px;width:1.5px;height:29px;background:#6a6a6a"></div>
<div class="t" style="left:245px;top:7.5px;font-size:20px;color:#f0f0f0">1</div>
<svg class="a" style="left:385px;top:10px" width="18" height="12"><path d="M2 3l7 6 7-6" fill="none" stroke="#e0e0e0" stroke-width="2"/></svg>
<svg class="a" style="left:526px;top:4px" width="34" height="28"><path d="M14.5 3 A11 11 0 1 0 25.5 14 L14.5 14 Z" fill="#8f8f8f"/><path d="M17 2.5 L22 2.5 L26 6.5 L26 11.5 L17 11.5 Z" fill="none" stroke="#8f8f8f" stroke-width="1.8"/><path d="M27 22 L33 22 L30 25 Z" fill="#9a9a9a"/></svg>
<div class="t" style="left:592px;top:7.5px;font-size:20px;color:#e6e6e6;letter-spacing:0.65px">[Basic] (working)</div>
<svg class="a" style="left:796px;top:10px" width="18" height="12"><path d="M2 3l7 6 7-6" fill="none" stroke="#d0d0d0" stroke-width="2"/></svg>
<div class="a" style="left:843.5px;top:6px;width:21.5px;height:21.5px;border-radius:50%;background:#1b9e2c"></div>
<div class="t" style="left:876px;top:7.5px;font-size:20px;color:#e6e6e6;letter-spacing:0.7px">No errors</div>
<svg class="a" style="left:1001px;top:10px" width="18" height="12"><path d="M2 3l7 6 7-6" fill="none" stroke="#d0d0d0" stroke-width="2"/></svg>
<div class="a" style="left:1390px;top:2.5px;width:507.5px;height:30px;border-radius:15px;background:#636363"></div>
<svg class="a" style="left:2056px;top:6px" width="32" height="24"><rect x="1" y="1" width="14" height="21" fill="none" stroke="#b8b8b8" stroke-width="1.8"/><rect x="15" y="1" width="14" height="21" fill="none" stroke="#b8b8b8" stroke-width="1.8"/></svg>
<svg class="a" style="left:2098px;top:4px" width="24" height="28"><g fill="#7a7a7a"><rect x="16" y="6" width="2" height="2"/><rect x="12" y="10" width="2" height="2"/><rect x="16" y="10" width="2" height="2"/><rect x="8" y="14" width="2" height="2"/><rect x="12" y="14" width="2" height="2"/><rect x="16" y="14" width="2" height="2"/><rect x="4" y="18" width="2" height="2"/><rect x="8" y="18" width="2" height="2"/><rect x="12" y="18" width="2" height="2"/><rect x="16" y="18" width="2" height="2"/></g></svg>

</div>
<div id="vscroll" class="a"><div class="a" style="left:2px;top:137.5px;width:28px;height:1138px;border-radius:14px;background:#696969"></div></div>
<!-- DOCK -->
<div id="dock" class="a">
<svg class="a" style="left:0;top:0" width="672" height="1492" viewBox="2208 136 672 1492">
<rect x="2208" y="136" width="672" height="1492" fill="#3a3a3a"/>
<rect x="2210" y="136" width="1.5" height="1492" fill="#454545"/>
<rect x="2213.5" y="146" width="75" height="1479" fill="#535353"/>
<rect x="2213.5" y="337.5" width="75" height="2" fill="#3c3c3c"/>
<rect x="2293.5" y="146" width="75" height="1479" fill="#535353"/>
<rect x="2293.5" y="281.5" width="75" height="2" fill="#3c3c3c"/>
<g fill="#2c2c2c">
<rect x="2232" y="152" width="2" height="8"/><rect x="2236" y="152" width="2" height="8"/><rect x="2240" y="152" width="2" height="8"/><rect x="2244" y="152" width="2" height="8"/><rect x="2248" y="152" width="2" height="8"/><rect x="2252" y="152" width="2" height="8"/><rect x="2256" y="152" width="2" height="8"/><rect x="2260" y="152" width="2" height="8"/><rect x="2264" y="152" width="2" height="8"/><rect x="2268" y="152" width="2" height="8"/>
<rect x="2312" y="152" width="2" height="8"/><rect x="2316" y="152" width="2" height="8"/><rect x="2320" y="152" width="2" height="8"/><rect x="2324" y="152" width="2" height="8"/><rect x="2328" y="152" width="2" height="8"/><rect x="2332" y="152" width="2" height="8"/><rect x="2336" y="152" width="2" height="8"/><rect x="2340" y="152" width="2" height="8"/><rect x="2344" y="152" width="2" height="8"/><rect x="2348" y="152" width="2" height="8"/>
</g>
<!-- folder lightning -->
<path d="M2234 177.5 Q2234 176 2235.5 176 L2246.5 176 L2250.5 180 L2266.5 180 Q2268 180 2268 181.5 L2268 202.5 Q2268 204 2266.5 204 L2235.5 204 Q2234 204 2234 202.5 Z" fill="#c8c8c8"/>
<path d="M2236 178 L2245.8 178 L2248.5 181 L2236 181 Z" fill="#535353"/>
<path d="M2260.5 183 L2252 193.5 L2258 193.5 L2253.5 201.5 L2262.5 191.5 L2257 191.5 Z" fill="#1a1a1a"/>
<!-- char styles -->
<path d="M2249.5 254 L2259.5 231 L2269.5 254" fill="none" stroke="#c4c4c4" stroke-width="3"/>
<path d="M2253.5 245 L2265.5 245" stroke="#c4c4c4" stroke-width="2.6"/>
<rect x="2240" y="251.5" width="11" height="11" fill="none" stroke="#c4c4c4" stroke-width="2.6"/>
<rect x="2235" y="247" width="10" height="10" fill="#535353" stroke="#c4c4c4" stroke-width="2"/>
<!-- para styles -->
<path d="M2259 286.5 L2259 311.5 M2265 286.5 L2265 311.5" stroke="#c4c4c4" stroke-width="2.6"/>
<path d="M2266 285.5 L2253 285.5 A7.3 7.3 0 0 0 2253 300 L2259 300 L2259 285.5 Z" fill="#c4c4c4"/>
<rect x="2240" y="305.5" width="11" height="11" fill="none" stroke="#c4c4c4" stroke-width="2.6"/>
<rect x="2235" y="301" width="10" height="10" fill="#535353" stroke="#c4c4c4" stroke-width="2"/>
<!-- layers -->
<path d="M2331 174 L2347.5 184.5 L2331 195 L2314.5 184.5 Z" fill="#c8c8c8"/>
<path d="M2314.5 194 L2318.5 191.5 L2331 199.5 L2343.5 191.5 L2347.5 194 L2331 204.5 Z" fill="#c8c8c8"/>
<!-- links -->
<path d="M2324 253.1 L2320.5 253.1 A6.6 6.6 0 0 1 2320.5 239.9 L2329.5 239.9 A6.6 6.6 0 0 1 2335.7 248.8" fill="none" stroke="#c2c2c2" stroke-width="3.8"/>
<path d="M2337.5 239.9 L2341.5 239.9 A6.6 6.6 0 0 1 2341.5 253.1 L2332.5 253.1 A6.6 6.6 0 0 1 2326.4 244" fill="none" stroke="#c2c2c2" stroke-width="3.8"/>
</svg>

</div>
<!-- PROPERTIES -->
<div id="props" class="a">
<div class="a" style="left:-2374px;top:-145px;width:2880px;height:1628px">
<div class="a" style="left:2374px;top:145px;width:506.0px;height:54.5px;background:#3b3b3b;"></div>
<div class="a" style="left:2374px;top:146px;width:164.5px;height:54.0px;background:#535353;"></div>
<div class="a" style="left:2540px;top:146px;width:98.8px;height:52.0px;background:#444444;"></div>
<div class="a" style="left:2640.5px;top:146px;width:162.2px;height:52.0px;background:#444444;"></div>
<div class="a" style="left:2804.5px;top:146px;width:75.5px;height:52.0px;background:#444444;"></div>
<div class="t" style="left:2398.5px;top:161.2px;font-size:23px;color:#f4f4f4;font-weight:700;letter-spacing:0px;">Properties</div>
<div class="t" style="left:2563px;top:161.2px;font-size:23px;color:#c2c2c2;font-weight:700;letter-spacing:-0.6px;">Pages</div>
<div class="t" style="left:2662.5px;top:161.2px;font-size:23px;color:#c2c2c2;font-weight:700;letter-spacing:0px;">CC Libraries</div>
<div class="a" style="left:2855px;top:199px;width:25.0px;height:1396.0px;background:#4b4b4b;"></div>
<div class="a" style="left:2857px;top:204px;width:19.0px;height:1149.0px;background:#676767;border-radius:10px"></div>
<div class="a" style="left:2374px;top:265.5px;width:481.0px;height:2.5px;background:#484848;"></div>
<div class="a" style="left:2374px;top:529.4px;width:481.0px;height:2.5px;background:#484848;"></div>
<div class="a" style="left:2374px;top:722.8px;width:481.0px;height:2.5px;background:#484848;"></div>
<div class="a" style="left:2374px;top:1301.7px;width:481.0px;height:2.5px;background:#484848;"></div>
<div class="a" style="left:2374px;top:1473.4px;width:481.0px;height:2.5px;background:#484848;"></div>
<div class="a" style="left:2374px;top:1599px;width:481.0px;height:2.5px;background:#484848;"></div>
<div class="a" style="left:2394px;top:1174px;width:451.0px;height:1.5px;background:#484848;"></div>
<div class="t" style="left:2394px;top:222.8px;font-size:22px;color:#f2f2f2;font-weight:400;letter-spacing:0.28px;">Text Insertion</div>
<div class="t" style="left:2394px;top:290.4px;font-size:22px;color:#f2f2f2;font-weight:400;letter-spacing:0px;">Text Style</div>
<div class="t" style="left:2394px;top:554.2px;font-size:21px;color:#f2f2f2;font-weight:400;letter-spacing:0px;">Appearance</div>
<div class="t" style="left:2394px;top:748.6px;font-size:21px;color:#f2f2f2;font-weight:400;letter-spacing:0px;">Character</div>
<div class="t" style="left:2394px;top:1327.0px;font-size:21px;color:#f2f2f2;font-weight:400;letter-spacing:0px;">Paragraph</div>
<div class="t" style="left:2394px;top:1498.3px;font-size:21.5px;color:#f2f2f2;font-weight:400;letter-spacing:0.2px;">Bullets and Numbering</div>
<div class="t" style="left:2394px;top:1621.8px;font-size:21.5px;color:#f2f2f2;font-weight:400;letter-spacing:0.2px;">Quick Actions</div>
<div class="a" style="left:2395px;top:332.7px;width:437px;height:41px;border:1.5px solid #6f6f6f;border-radius:4px;background:#535353;overflow:hidden"><div class="a" style="left:0;top:0;width:214.5px;height:38px;background:#2e2e2e"></div><div class="a" style="left:214.5px;top:0;width:1.5px;height:38px;background:#6b6b6b"></div></div>
<div class="t" style="left:2423px;top:343.8px;font-size:21px;color:#4ca6f2;font-weight:400;letter-spacing:-0.15px;">Paragraph Styles</div>
<div class="t" style="left:2645.7px;top:343.8px;font-size:21px;color:#f0f0f0;font-weight:400;letter-spacing:0px;">Character Styles</div>
<div class="a" style="left:2395px;top:391px;width:438.0px;height:67.0px;background:#424242;border:1.5px solid #6f6f6f;border-radius:4px"></div>
<div class="a" style="left:2794.25px;top:392px;width:1.5px;height:65.0px;background:#6f6f6f;"></div>
<svg class="a" style="left:2804.5px;top:419.0px" width="18" height="11"><path d="M2 2 L9.0 9 L16 2" fill="none" stroke="#e2e2e2" stroke-width="2"/></svg>
<div class="a" style="left:2406px;top:401px;width:48.5px;height:47.5px;background:#fff;border-radius:3px"></div>
<div class="t" style="left:2410px;top:407px;font-family:'Liberation Serif',serif;font-size:31px;color:#111;letter-spacing:-1px">Ag</div>
<div class="t" style="left:2466px;top:414.4px;font-size:21px;color:#f0f0f0;font-weight:400;letter-spacing:0px;">[Basic Paragraph]+</div>
<svg class="a" style="left:2400px;top:478px" width="440" height="32" viewBox="2400 478 440 32">
<path d="M2419 481 L2419 502 M2424.5 481 L2424.5 502" stroke="#c8c8c8" stroke-width="2.2"/><path d="M2420 481 L2415 481 A5.5 5.5 0 0 0 2415 492 L2420 492 Z" fill="#c8c8c8"/>
<path d="M2428 503 L2434 503 L2431 506 Z" fill="#c8c8c8"/>
<path d="M2667 486 L2667 480.5 L2681 480.5 L2681 487" fill="none" stroke="#c8c8c8" stroke-width="2"/>
<rect x="2675" y="487" width="14" height="16" fill="none" stroke="#c8c8c8" stroke-width="2"/>
<path d="M2657 492 L2668 492" stroke="#c8c8c8" stroke-width="2.4"/><path d="M2666 487 L2672 492 L2666 497 Z" fill="#c8c8c8"/>
<path d="M2744 481 L2744 503 M2749 481 L2749 503" stroke="#c8c8c8" stroke-width="2.2"/><path d="M2745 481 L2740 481 A5.5 5.5 0 0 0 2740 492 L2745 492 Z" fill="#c8c8c8"/>
<path d="M2756 488 L2760 484 M2752 494 L2764 494 M2753 500 L2763 488" stroke="#c8c8c8" stroke-width="1.6"/>
<rect x="2801" y="483" width="20" height="20" fill="none" stroke="#c8c8c8" stroke-width="1.8"/>
<path d="M2811 487 L2811 499 M2805 493 L2817 493" stroke="#c8c8c8" stroke-width="2"/>
</svg>
<div class="a" style="left:2400.7px;top:602.4px;width:34.3px;height:34.4px;background:#fff"></div>
<svg class="a" style="left:2400.7px;top:602.4px" width="35" height="35" viewBox="0 0 35 35"><path d="M4.5 5 L30 5 L30 14 L27.5 14 L27.5 9.5 L20 9.5 L20 27 L24.5 27 L24.5 31 L10.5 31 L10.5 27 L15 27 L15 9.5 L7 9.5 L7 14 L4.5 14 Z" fill="#000"/></svg>
<div class="t" style="left:2462px;top:606.2px;font-size:21px;color:#f0f0f0;font-weight:400;letter-spacing:0px;">Fill</div>
<div class="a" style="left:2400.7px;top:660.7px;width:33.3px;height:33px;background:#fff"></div>
<svg class="a" style="left:2400.7px;top:660.7px" width="34" height="33" viewBox="0 0 34 33"><path d="M4.5 4 L29 4 L29 12 L27 12 L27 8 L19.5 8 L19.5 26 L23.5 26 L23.5 29 L10.5 29 L10.5 26 L14.5 26 L14.5 8 L7 8 L7 12 L4.5 12 Z" fill="none" stroke="#c8c8c8" stroke-width="0.9"/><path d="M0 31.5 L32 1.5" stroke="#ff0000" stroke-width="3.5"/></svg>
<div class="t" style="left:2462px;top:664.8px;font-size:21px;color:#d6d6d6;font-weight:400;letter-spacing:0.3px;">Stroke</div>
<div class="a" style="left:2463px;top:686px;width:62.0px;height:2.0px;background:#c0c0c0;"></div>
<div class="a" style="left:2586.6px;top:654.6px;width:138.8px;height:40.4px;background:#424242;border:1.5px solid #6f6f6f;border-radius:4px"></div>
<div class="a" style="left:2620.5px;top:655.5px;width:1.5px;height:38.5px;background:#6f6f6f;"></div>
<div class="a" style="left:2688.3px;top:655.5px;width:1.5px;height:38.5px;background:#6f6f6f;"></div>
<svg class="a" style="left:2595.0px;top:661.8px" width="18" height="26"><path d="M2 8 L9 2 L16 8 M2 18 L9 24 L16 18" fill="none" stroke="#dcdcdc" stroke-width="1.8"/></svg>
<div class="t" style="left:2628px;top:665.6px;font-size:20.5px;color:#f0f0f0;font-weight:400;letter-spacing:0px;">0 pt</div>
<svg class="a" style="left:2698.0px;top:669.3px" width="18" height="11"><path d="M2 2 L9.0 9 L16 2" fill="none" stroke="#e2e2e2" stroke-width="2"/></svg>
<div class="a" style="left:2736px;top:654.6px;width:109.7px;height:40.4px;background:#575757;border-radius:4px"></div>
<svg class="a" style="left:2818.0px;top:669.3px" width="18" height="11"><path d="M2 2 L9.0 9 L16 2" fill="none" stroke="#8f8f8f" stroke-width="2"/></svg>
<div class="a" style="left:2395px;top:790.6px;width:438.0px;height:39.8px;background:#424242;border:1.5px solid #6f6f6f;border-radius:4px"></div>
<div class="a" style="left:2796.05px;top:791.6px;width:1.5px;height:37.8px;background:#6f6f6f;"></div>
<svg class="a" style="left:2806.0px;top:805.0px" width="18" height="11"><path d="M2 2 L9.0 9 L16 2" fill="none" stroke="#e2e2e2" stroke-width="2"/></svg>
<svg class="a" style="left:2396px;top:798px" width="42" height="26"><circle cx="10" cy="10" r="6.5" fill="none" stroke="#b8b8b8" stroke-width="1.8"/><path d="M14.5 14.5 L20.5 20.5" stroke="#b8b8b8" stroke-width="2"/><path d="M25 9 L30 14 L35 9" fill="none" stroke="#b8b8b8" stroke-width="1.6"/></svg>
<div class="t" style="left:2442.4px;top:799.1px;font-size:21.5px;color:#f4f4f4;font-weight:400;letter-spacing:0px;">Legitima</div>
<div class="a" style="left:2395px;top:842.8px;width:438.0px;height:39.8px;background:#424242;border:1.5px solid #6f6f6f;border-radius:4px"></div>
<div class="a" style="left:2796.05px;top:843.8px;width:1.5px;height:37.8px;background:#6f6f6f;"></div>
<svg class="a" style="left:2806.0px;top:857.2px" width="18" height="11"><path d="M2 2 L9.0 9 L16 2" fill="none" stroke="#e2e2e2" stroke-width="2"/></svg>
<div class="t" style="left:2402.6px;top:852.9px;font-size:20.6px;color:#f4f4f4;font-weight:400;letter-spacing:0px;">Regular</div>
<div class="a" style="left:2441px;top:895px;width:158.0px;height:40.0px;background:#424242;border:1.5px solid #6f6f6f;border-radius:4px"></div>
<div class="a" style="left:2476.05px;top:896px;width:1.5px;height:38.0px;background:#6f6f6f;"></div>
<svg class="a" style="left:2449.9px;top:902.0px" width="18" height="26"><path d="M2 8 L9 2 L16 8 M2 18 L9 24 L16 18" fill="none" stroke="#dcdcdc" stroke-width="1.8"/></svg>
<div class="a" style="left:2561.95px;top:896px;width:1.5px;height:38.0px;background:#6f6f6f;"></div>
<svg class="a" style="left:2571.8px;top:909.5px" width="18" height="11"><path d="M2 2 L9.0 9 L16 2" fill="none" stroke="#e2e2e2" stroke-width="2"/></svg>
<div class="t" style="left:2484px;top:905.1px;font-size:20.5px;color:#f4f4f4;font-weight:400;letter-spacing:0px;">9 pt</div>
<div class="a" style="left:2675px;top:895px;width:157.5px;height:40.0px;background:#424242;border:1.5px solid #6f6f6f;border-radius:4px"></div>
<div class="a" style="left:2710.25px;top:896px;width:1.5px;height:38.0px;background:#6f6f6f;"></div>
<svg class="a" style="left:2684.0px;top:902.0px" width="18" height="26"><path d="M2 8 L9 2 L16 8 M2 18 L9 24 L16 18" fill="none" stroke="#dcdcdc" stroke-width="1.8"/></svg>
<div class="a" style="left:2796.25px;top:896px;width:1.5px;height:38.0px;background:#6f6f6f;"></div>
<svg class="a" style="left:2805.8px;top:909.5px" width="18" height="11"><path d="M2 2 L9.0 9 L16 2" fill="none" stroke="#e2e2e2" stroke-width="2"/></svg>
<div class="t" style="left:2719.5px;top:905.1px;font-size:20.5px;color:#f4f4f4;font-weight:400;letter-spacing:0px;">13 pt</div>
<div class="a" style="left:2441px;top:947px;width:158.0px;height:39.6px;background:#424242;border:1.5px solid #6f6f6f;border-radius:4px"></div>
<div class="a" style="left:2442.5px;top:948.5px;width:34.3px;height:36.6px;background:#5c5c5c;border-radius:3px 0 0 3px"></div>
<div class="a" style="left:2476.05px;top:948px;width:1.5px;height:37.6px;background:#6f6f6f;"></div>
<svg class="a" style="left:2449.9px;top:953.8px" width="18" height="26"><path d="M2 8 L9 2 L16 8 M2 18 L9 24 L16 18" fill="none" stroke="#8a8a8a" stroke-width="1.8"/></svg>
<div class="a" style="left:2561.95px;top:948px;width:1.5px;height:37.6px;background:#6f6f6f;"></div>
<svg class="a" style="left:2571.8px;top:961.3px" width="18" height="11"><path d="M2 2 L9.0 9 L16 2" fill="none" stroke="#e2e2e2" stroke-width="2"/></svg>
<div class="t" style="left:2484px;top:956.9px;font-size:20.5px;color:#f4f4f4;font-weight:400;letter-spacing:0px;">Metrics</div>
<div class="a" style="left:2675px;top:947px;width:157.5px;height:39.6px;background:#424242;border:1.5px solid #6f6f6f;border-radius:4px"></div>
<div class="a" style="left:2710.25px;top:948px;width:1.5px;height:37.6px;background:#6f6f6f;"></div>
<svg class="a" style="left:2684.0px;top:953.8px" width="18" height="26"><path d="M2 8 L9 2 L16 8 M2 18 L9 24 L16 18" fill="none" stroke="#dcdcdc" stroke-width="1.8"/></svg>
<div class="a" style="left:2796.25px;top:948px;width:1.5px;height:37.6px;background:#6f6f6f;"></div>
<svg class="a" style="left:2805.8px;top:961.3px" width="18" height="11"><path d="M2 2 L9.0 9 L16 2" fill="none" stroke="#e2e2e2" stroke-width="2"/></svg>
<div class="t" style="left:2719.5px;top:956.9px;font-size:20.5px;color:#f4f4f4;font-weight:400;letter-spacing:0px;">0</div>
<div class="a" style="left:2441px;top:999.5px;width:158.0px;height:39.3px;background:#424242;border:1.5px solid #6f6f6f;border-radius:4px"></div>
<div class="a" style="left:2476.05px;top:1000.5px;width:1.5px;height:37.3px;background:#6f6f6f;"></div>
<svg class="a" style="left:2449.9px;top:1006.1px" width="18" height="26"><path d="M2 8 L9 2 L16 8 M2 18 L9 24 L16 18" fill="none" stroke="#dcdcdc" stroke-width="1.8"/></svg>
<div class="a" style="left:2561.95px;top:1000.5px;width:1.5px;height:37.3px;background:#6f6f6f;"></div>
<svg class="a" style="left:2571.8px;top:1013.6px" width="18" height="11"><path d="M2 2 L9.0 9 L16 2" fill="none" stroke="#e2e2e2" stroke-width="2"/></svg>
<div class="t" style="left:2484px;top:1009.3px;font-size:20.5px;color:#f4f4f4;font-weight:400;letter-spacing:0px;">200%</div>
<div class="a" style="left:2675px;top:999.5px;width:157.5px;height:39.3px;background:#424242;border:1.5px solid #6f6f6f;border-radius:4px"></div>
<div class="a" style="left:2710.25px;top:1000.5px;width:1.5px;height:37.3px;background:#6f6f6f;"></div>
<svg class="a" style="left:2684.0px;top:1006.1px" width="18" height="26"><path d="M2 8 L9 2 L16 8 M2 18 L9 24 L16 18" fill="none" stroke="#dcdcdc" stroke-width="1.8"/></svg>
<div class="a" style="left:2796.25px;top:1000.5px;width:1.5px;height:37.3px;background:#6f6f6f;"></div>
<svg class="a" style="left:2805.8px;top:1013.6px" width="18" height="11"><path d="M2 2 L9.0 9 L16 2" fill="none" stroke="#e2e2e2" stroke-width="2"/></svg>
<div class="t" style="left:2719.5px;top:1009.3px;font-size:20.5px;color:#f4f4f4;font-weight:400;letter-spacing:0px;">100%</div>
<div class="a" style="left:2441px;top:1051.7px;width:158.0px;height:39.3px;background:#424242;border:1.5px solid #6f6f6f;border-radius:4px"></div>
<div class="a" style="left:2476.05px;top:1052.7px;width:1.5px;height:37.3px;background:#6f6f6f;"></div>
<svg class="a" style="left:2449.9px;top:1058.3px" width="18" height="26"><path d="M2 8 L9 2 L16 8 M2 18 L9 24 L16 18" fill="none" stroke="#dcdcdc" stroke-width="1.8"/></svg>
<div class="t" style="left:2484px;top:1061.5px;font-size:20.5px;color:#f4f4f4;font-weight:400;letter-spacing:0px;">0 pt</div>
<div class="a" style="left:2675px;top:1051.7px;width:157.5px;height:39.3px;background:#424242;border:1.5px solid #6f6f6f;border-radius:4px"></div>
<div class="a" style="left:2710.25px;top:1052.7px;width:1.5px;height:37.3px;background:#6f6f6f;"></div>
<svg class="a" style="left:2684.0px;top:1058.3px" width="18" height="26"><path d="M2 8 L9 2 L16 8 M2 18 L9 24 L16 18" fill="none" stroke="#dcdcdc" stroke-width="1.8"/></svg>
<div class="t" style="left:2719.5px;top:1061.5px;font-size:20.5px;color:#f4f4f4;font-weight:400;letter-spacing:0px;">0°</div>
<svg class="a" style="left:2380px;top:890px" width="300" height="215" viewBox="2380 890 300 215">
<g fill="#c0c0c0">
<path d="M2409 901 L2431 901 L2431 908 L2429 908 L2429 904.5 L2422 904.5 L2422 926 L2425 926 L2425 929 L2415 929 L2415 926 L2418 926 L2418 904.5 L2411 904.5 L2411 908 L2409 908 Z"/>
<path d="M2394 916 L2408 916 L2408 920 L2406.5 920 L2406.5 918.2 L2402.5 918.2 L2402.5 927 L2404.5 927 L2404.5 929 L2397.5 929 L2397.5 927 L2399.5 927 L2399.5 918.2 L2395.5 918.2 L2395.5 920 L2394 920 Z"/>
</g>
<g fill="none" stroke="#c0c0c0" stroke-width="1.6">
<path d="M2640 912 L2645.5 898.5 L2651 912 M2642 908 L2649 908 M2640 932 L2645.5 919 L2651 932 M2642 928 L2649 928 M2636 913.5 L2660 913.5 M2632 933 L2660 933"/>
<path d="M2632 917 L2632 932 M2629 920 L2632 916.5 L2635 920 M2629 929 L2632 932.5 L2635 929"/>
<path d="M2394 952 L2400 966 L2406 952 M2404 968 L2412 952 M2410 966 L2416 952 L2422 966 M2412.5 962 L2419.5 962"/>
<path d="M2418 982 L2428 982 M2422 978.5 L2418 982 L2422 985.5"/>
</g>
<rect x="2628" y="951.5" width="36" height="21" fill="#c0c0c0"/>
<path d="M2632 955 L2637.5 969 L2643 955 M2641 969 L2648 955 L2655 969 M2643.5 965 L2652.5 965" fill="none" stroke="#535353" stroke-width="2.2"/>
<path d="M2632 981 L2660 981 M2636 977.5 L2632 981 L2636 984.5 M2656 977.5 L2660 981 L2656 984.5" fill="none" stroke="#c0c0c0" stroke-width="1.6"/>
<path d="M2395 1005 L2395 1030 M2391.5 1008.5 L2395 1004.5 L2398.5 1008.5 M2391.5 1026.5 L2395 1030.5 L2398.5 1026.5" fill="none" stroke="#c0c0c0" stroke-width="1.8"/>
<path d="M2403 1005 L2425 1005 L2425 1012 L2422.5 1012 L2422.5 1008.5 L2416 1008.5 L2416 1029 L2420 1029 L2420 1032 L2408 1032 L2408 1029 L2412 1029 L2412 1008.5 L2405.5 1008.5 L2405.5 1012 L2403 1012 Z" fill="#c0c0c0"/>
<path d="M2633 1004 L2658 1004 L2658 1011 L2655.5 1011 L2655.5 1007.5 L2648 1007.5 L2648 1022 L2652 1022 L2652 1025 L2639 1025 L2639 1022 L2643 1022 L2643 1007.5 L2635.5 1007.5 L2635.5 1011 L2633 1011 Z" fill="#c0c0c0"/>
<path d="M2630 1032 L2661 1032 M2634 1028.5 L2630 1032 L2634 1035.5 M2657 1028.5 L2661 1032 L2657 1035.5" fill="none" stroke="#c0c0c0" stroke-width="1.6"/>
<path d="M2396 1077 L2402.5 1060 L2409 1077 M2398.5 1071.5 L2406.5 1071.5 M2395 1080.5 L2413 1080.5" fill="none" stroke="#c0c0c0" stroke-width="1.6"/>
<text x="2410" y="1070" font-size="13" fill="#c0c0c0" font-family="Liberation Sans">a</text>
<path d="M2421 1074.5 L2421 1085 M2417.5 1077.5 L2421 1073.5 L2424.5 1077.5" fill="none" stroke="#c0c0c0" stroke-width="1.6"/>
<path d="M2637 1059 L2660 1059 L2659 1066 L2657 1066 L2656.5 1062.5 L2651 1062.5 L2645.5 1082 L2649.5 1082 L2649 1085 L2636.5 1085 L2637 1082 L2641 1082 L2646.5 1062.5 L2640.5 1062.5 L2639 1066 L2637 1066 Z" fill="#c0c0c0"/>
</g>
</svg>
<div class="a" style="left:2395px;top:1113px;width:206.0px;height:39.8px;background:#424242;border:1.5px solid #6f6f6f;border-radius:4px"></div>
<div class="a" style="left:2563.95px;top:1114px;width:1.5px;height:37.8px;background:#6f6f6f;"></div>
<svg class="a" style="left:2574.0px;top:1127.5px" width="18" height="11"><path d="M2 2 L9.0 9 L16 2" fill="none" stroke="#e2e2e2" stroke-width="2"/></svg>
<div class="t" style="left:2402.6px;top:1122.8px;font-size:21.5px;color:#f4f4f4;font-weight:400;letter-spacing:0px;">Dutch: 2005 ...</div>
<div class="a" style="left:2628.7px;top:1113px;width:206.3px;height:38px;border:1.5px solid #6f6f6f;border-radius:4px"></div>
<div class="t" style="left:2682.8px;top:1123.2px;font-size:21px;color:#f4f4f4;font-weight:400;letter-spacing:0.15px;">OpenType</div>
<svg class="a" style="left:2390px;top:1200px" width="460" height="100" viewBox="2390 1200 460 100">
<g font-family="Liberation Serif" fill="#c0c0c0" font-weight="700">
<text x="2402" y="1231" font-size="27" letter-spacing="-2">TT</text>
<text x="2469" y="1231" font-size="27">T</text><text x="2485" y="1231" font-size="19">T</text>
<text x="2539" y="1231" font-size="27" letter-spacing="-1">tt</text>
<text x="2607" y="1231" font-size="27">T</text><text x="2625" y="1219" font-size="11">1</text>
<text x="2675" y="1231" font-size="27">T</text><text x="2692" y="1235" font-size="11">1</text>
<text x="2745" y="1231" font-size="27">T</text>
<text x="2813" y="1231" font-size="27">T</text>
</g>
<rect x="2743" y="1235" width="21" height="2" fill="#c0c0c0"/>
<rect x="2810" y="1219.5" width="24" height="2" fill="#c0c0c0"/>
<rect x="2808.4" y="1256" width="37.3" height="37.4" rx="5" fill="#2e2e2e"/>
<circle cx="2817" cy="1275" r="3.3" fill="#d8d8d8"/><circle cx="2827" cy="1275" r="3.3" fill="#d8d8d8"/><circle cx="2837" cy="1275" r="3.3" fill="#d8d8d8"/>
</svg>
<div class="a" style="left:2444px;top:1370px;width:43.7px;height:43.4px;background:#2e2e2e;border-radius:5px"></div>
<svg class="a" style="left:0;top:0" width="2880" height="1628"><g fill="#c8c8c8"><rect x="2404" y="1377.6" width="30" height="2"/><rect x="2404" y="1383.6" width="26" height="2"/><rect x="2404" y="1389.6" width="30" height="2"/><rect x="2404" y="1395.6" width="26" height="2"/><rect x="2404" y="1401.6" width="30" height="2"/><rect x="2451" y="1377.6" width="30" height="2"/><rect x="2455" y="1383.6" width="22" height="2"/><rect x="2451" y="1389.6" width="30" height="2"/><rect x="2455" y="1395.6" width="22" height="2"/><rect x="2451" y="1401.6" width="30" height="2"/><rect x="2498" y="1377.6" width="30" height="2"/><rect x="2502" y="1383.6" width="26" height="2"/><rect x="2498" y="1389.6" width="30" height="2"/><rect x="2502" y="1395.6" width="26" height="2"/><rect x="2498" y="1401.6" width="30" height="2"/><rect x="2552" y="1377.6" width="28" height="2"/><rect x="2552" y="1383.6" width="28" height="2"/><rect x="2552" y="1389.6" width="28" height="2"/><rect x="2552" y="1395.6" width="28" height="2"/><rect x="2552" y="1401.6" width="20" height="2"/><rect x="2600" y="1377.6" width="28" height="2"/><rect x="2600" y="1383.6" width="28" height="2"/><rect x="2600" y="1389.6" width="28" height="2"/><rect x="2600" y="1395.6" width="28" height="2"/><rect x="2604" y="1401.6" width="20" height="2"/><rect x="2648" y="1377.6" width="28" height="2"/><rect x="2648" y="1383.6" width="28" height="2"/><rect x="2648" y="1389.6" width="28" height="2"/><rect x="2648" y="1395.6" width="28" height="2"/><rect x="2656" y="1401.6" width="20" height="2"/><rect x="2696" y="1377.6" width="28" height="2"/><rect x="2696" y="1383.6" width="28" height="2"/><rect x="2696" y="1389.6" width="28" height="2"/><rect x="2696" y="1395.6" width="28" height="2"/><rect x="2696" y="1401.6" width="28" height="2"/><rect x="2748" y="1377.6" width="24" height="2"/><rect x="2752" y="1383.6" width="20" height="2"/><rect x="2748" y="1389.6" width="24" height="2"/><rect x="2752" y="1395.6" width="20" height="2"/><rect x="2748" y="1401.6" width="24" height="2"/><rect x="2774.5" y="1375.6" width="2" height="30"/><rect x="2796" y="1377.6" width="24" height="2"/><rect x="2796" y="1383.6" width="24" height="2"/><rect x="2796" y="1389.6" width="24" height="2"/><rect x="2796" y="1395.6" width="24" height="2"/><rect x="2796" y="1401.6" width="24" height="2"/><rect x="2822.5" y="1375.6" width="2" height="30"/></g><circle cx="2817" cy="1447" r="3.3" fill="#c8c8c8"/><circle cx="2827.5" cy="1447" r="3.3" fill="#c8c8c8"/><circle cx="2838" cy="1447" r="3.3" fill="#c8c8c8"/><g fill="#c8c8c8"><circle cx="2408" cy="1556" r="4"/><circle cx="2408" cy="1572" r="4"/><rect x="2415" y="1553" width="19" height="2"/><rect x="2415" y="1558" width="19" height="2"/><rect x="2415" y="1569" width="19" height="2"/><rect x="2415" y="1574" width="19" height="2"/><rect x="2479" y="1553" width="19" height="2"/><rect x="2479" y="1558" width="19" height="2"/><rect x="2479" y="1569" width="19" height="2"/><rect x="2479" y="1574" width="19" height="2"/><text x="2469" y="1561" font-size="14" font-family="Liberation Sans">1</text><text x="2467" y="1578" font-size="14" font-family="Liberation Sans">2</text></g></svg>
<div class="a" style="left:2704.8px;top:1540.6px;width:128.2px;height:38.4px;border:1.5px solid #6f6f6f;border-radius:4px"></div>
<div class="t" style="left:2730.9px;top:1549.8px;font-size:21.5px;color:#f4f4f4;font-weight:400;letter-spacing:0.1px;">Options</div>
</div>
</div>
</body></html>
